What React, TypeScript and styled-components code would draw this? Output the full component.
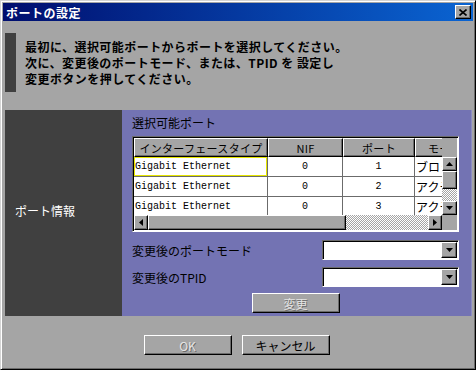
import React from "react";
import styled, { createGlobalStyle, css } from "styled-components";

const GlobalStyle = createGlobalStyle`
  html, body {
    margin: 0;
    padding: 0;
    background: #a5a5a5;
  }
  body {
    font-family: "Noto Sans CJK JP", "Noto Sans", sans-serif;
    font-size: 12px;
    color: #000;
  }
  * {
    box-sizing: border-box;
  }
`;

const raised = css`
  border: 1px solid;
  border-color: #fff #000 #000 #fff;
  box-shadow: inset -1px -1px #6b6b6b;
  background: #a5a5a5;
`;

const sunken = css`
  border: 1px solid;
  border-color: #6b6b6b #fff #fff #6b6b6b;
  box-shadow: inset 1px 1px #000;
`;

const checker = css`
  background: repeating-conic-gradient(#fff 0 25%, #a5a5a5 0 50%) 0 0 / 2px 2px;
`;

const Window = styled.div`
  width: 476px;
  height: 370px;
  border: 1px solid;
  border-color: #d4d4d4 #000 #000 #d4d4d4;
  box-shadow: inset 1px 1px #fff, inset -1px -1px #6b6b6b;
  padding: 2px;
  background: #a5a5a5;
  display: flex;
  flex-direction: column;
`;

const TitleBar = styled.div`
  height: 18px;
  background: linear-gradient(to right, #000e6e, #0a64d2);
  display: flex;
  align-items: center;
  justify-content: space-between;
  padding: 0 2px 0 3px;
`;

const Title = styled.span`
  color: #fff;
  font-weight: bold;
  font-size: 12px;
  letter-spacing: 0.5px;
`;

const CloseBtn = styled.div`
  ${raised};
  width: 16px;
  height: 14px;
  display: flex;
  align-items: center;
  justify-content: center;
`;

const Body = styled.div`
  flex: 1;
  padding: 12px 1px 0 2px;
  display: flex;
  flex-direction: column;
`;

const Message = styled.div`
  height: 59px;
  display: flex;
  gap: 9px;
  align-items: center;
`;

const MessageBar = styled.div`
  width: 11px;
  flex: none;
  align-self: stretch;
  background: #404040;
`;

const MessageText = styled.div`
  font-weight: bold;
  font-size: 12px;
  line-height: 16px;
  letter-spacing: 0.45px;
`;

const Panel = styled.div`
  margin-top: 18px;
  height: 206px;
  display: flex;
`;

const SideLabel = styled.div`
  width: 117px;
  flex: none;
  background: #404040;
  color: #fff;
  display: flex;
  align-items: center;
  padding: 0 0 6px 10px;
  font-size: 12px;
  white-space: nowrap;
`;

const Content = styled.div`
  flex: 1;
  min-width: 0;
  background: #7373b3;
  border-right: 1px solid #8c8cc4;
  padding: 4px 12px 3px 10px;
  display: flex;
  flex-direction: column;
`;

const SectionTitle = styled.div`
  height: 22px;
  line-height: 18px;
  font-size: 12px;
`;

const TableFrame = styled.div`
  ${sunken};
  height: 96px;
  padding: 1px;
  display: flex;
  flex-direction: column;
  background: #fff;
`;

const TableMain = styled.div`
  flex: 1;
  display: flex;
  overflow: hidden;
`;

const Viewport = styled.div`
  flex: 1;
  min-width: 0;
  overflow: hidden;
`;

const Grid = styled.div`
  display: grid;
  grid-template-columns: 134px 75px 72px 60px;
  grid-template-rows: 19px 20px 20px 20px;
`;

const HeadCell = styled.div`
  ${raised};
  display: flex;
  align-items: center;
  justify-content: center;
  font-size: 11px;
  letter-spacing: 0.3px;
  white-space: nowrap;
  overflow: hidden;
`;

const Cell = styled.div<{ $align?: "left" | "center"; $focus?: boolean }>`
  background: #fff;
  border-right: 1px solid #6b6b6b;
  border-bottom: 1px solid #6b6b6b;
  display: flex;
  align-items: center;
  justify-content: ${(p) => (p.$align === "left" ? "flex-start" : "center")};
  padding-left: ${(p) => (p.$align === "left" ? "1px" : "0")};
  font-family: "Liberation Mono", "Noto Sans CJK JP", monospace;
  font-size: 10px;
  white-space: nowrap;
  overflow: hidden;
  box-shadow: ${(p) => (p.$focus ? "inset 0 0 0 1px #e6e600" : "none")};
`;

const JpCell = styled(Cell)`
  font-family: "Noto Sans CJK JP", sans-serif;
  font-size: 12px;
`;

const VScroll = styled.div`
  width: 15px;
  flex: none;
  display: flex;
  flex-direction: column;
  background: #a5a5a5;
`;

const HeadGap = styled.div`
  height: 19px;
  flex: none;
  background: #a5a5a5;
`;

const ScrollBtn = styled.div<{ $w?: number; $h?: number }>`
  ${raised};
  width: ${(p) => (p.$w ? `${p.$w}px` : "auto")};
  height: ${(p) => (p.$h ? `${p.$h}px` : "auto")};
  flex: none;
  display: flex;
  align-items: center;
  justify-content: center;
`;

const Track = styled.div`
  flex: 1;
  ${checker};
`;

const HScroll = styled.div`
  height: 15px;
  flex: none;
  display: flex;
  background: #a5a5a5;
`;

const Corner = styled.div`
  width: 15px;
  flex: none;
  background: #a5a5a5;
`;

const FieldRow = styled.div<{ $mt: number }>`
  margin-top: ${(p) => p.$mt}px;
  height: 20px;
  display: flex;
  align-items: center;
  justify-content: space-between;
  font-size: 12px;
`;

const Combo = styled.div`
  ${sunken};
  width: 137px;
  height: 20px;
  background: #fff;
  padding: 1px;
  display: flex;
  justify-content: flex-end;
`;

const ComboBtn = styled.div`
  ${raised};
  width: 16px;
  height: 16px;
  display: flex;
  align-items: center;
  justify-content: center;
`;

const Button = styled.button`
  ${raised};
  width: 88px;
  height: 20px;
  padding: 0;
  font-family: "Noto Sans CJK JP", sans-serif;
  font-size: 12px;
  color: #000;
  &:disabled {
    color: #e4e4e4;
    text-shadow: 1px 1px #6b6b6b;
  }
`;

const ChangeRow = styled.div`
  margin-top: 6px;
  display: flex;
  justify-content: center;
`;

const Footer = styled.div`
  margin-top: 19px;
  display: flex;
  justify-content: center;
  gap: 10px;
  padding-right: 4px;
`;

type Dir = "up" | "down" | "left" | "right";

const Arrow = ({ dir }: { dir: Dir }) => {
  const pts: Record<Dir, string> = {
    up: "0,4 7,4 3.5,0",
    down: "0,0 7,0 3.5,4",
    left: "4,0 4,7 0,3.5",
    right: "0,0 0,7 4,3.5",
  };
  const vertical = dir === "up" || dir === "down";
  return (
    <svg width={vertical ? 7 : 4} height={vertical ? 4 : 7} viewBox={vertical ? "0 0 7 4" : "0 0 4 7"}>
      <polygon points={pts[dir]} fill="#000" />
    </svg>
  );
};

const ports = [
  { type: "Gigabit Ethernet", nif: 0, port: 1, state: "ブロッキング" },
  { type: "Gigabit Ethernet", nif: 0, port: 2, state: "アクティブ" },
  { type: "Gigabit Ethernet", nif: 0, port: 3, state: "アクティブ" },
];

const App = () => {
  return (
    <>
      <GlobalStyle />
      <Window>
        <TitleBar>
          <Title>ポートの設定</Title>
          <CloseBtn>
            <svg width="8" height="7" viewBox="0 0 8 7">
              <path d="M0.5 0.5 L7.5 6.5 M7.5 0.5 L0.5 6.5" stroke="#000" strokeWidth="1.6" />
            </svg>
          </CloseBtn>
        </TitleBar>
        <Body>
          <Message>
            <MessageBar />
            <MessageText>
              最初に、選択可能ポートからポートを選択してください。
              <br />
              次に、変更後のポートモード、または、TPID を 設定し
              <br />
              変更ボタンを押してください。
            </MessageText>
          </Message>
          <Panel>
            <SideLabel>ポート情報</SideLabel>
            <Content>
              <SectionTitle>選択可能ポート</SectionTitle>
              <TableFrame>
                <TableMain>
                  <Viewport>
                    <Grid>
                      <HeadCell>インターフェースタイプ</HeadCell>
                      <HeadCell>NIF</HeadCell>
                      <HeadCell>ポート</HeadCell>
                      <HeadCell>モード</HeadCell>
                      {ports.map((p, i) => (
                        <React.Fragment key={p.port}>
                          <Cell $align="left" $focus={i === 0}>
                            {p.type}
                          </Cell>
                          <Cell>{p.nif}</Cell>
                          <Cell>{p.port}</Cell>
                          <JpCell $align="left">{p.state}</JpCell>
                        </React.Fragment>
                      ))}
                    </Grid>
                  </Viewport>
                  <VScroll>
                    <HeadGap />
                    <ScrollBtn $h={14}>
                      <Arrow dir="up" />
                    </ScrollBtn>
                    <ScrollBtn $h={18} />
                    <Track />
                    <ScrollBtn $h={14}>
                      <Arrow dir="down" />
                    </ScrollBtn>
                  </VScroll>
                </TableMain>
                <HScroll>
                  <ScrollBtn $w={14}>
                    <Arrow dir="left" />
                  </ScrollBtn>
                  <ScrollBtn $w={198} />
                  <Track />
                  <ScrollBtn $w={14}>
                    <Arrow dir="right" />
                  </ScrollBtn>
                  <Corner />
                </HScroll>
              </TableFrame>
              <FieldRow $mt={8}>
                <span>変更後のポートモード</span>
                <Combo>
                  <ComboBtn>
                    <Arrow dir="down" />
                  </ComboBtn>
                </Combo>
              </FieldRow>
              <FieldRow $mt={7}>
                <span>変更後のTPID</span>
                <Combo>
                  <ComboBtn>
                    <Arrow dir="down" />
                  </ComboBtn>
                </Combo>
              </FieldRow>
              <ChangeRow>
                <Button disabled>変更</Button>
              </ChangeRow>
            </Content>
          </Panel>
          <Footer>
            <Button disabled>OK</Button>
            <Button>キャンセル</Button>
          </Footer>
        </Body>
      </Window>
    </>
  );
};

export default App;
